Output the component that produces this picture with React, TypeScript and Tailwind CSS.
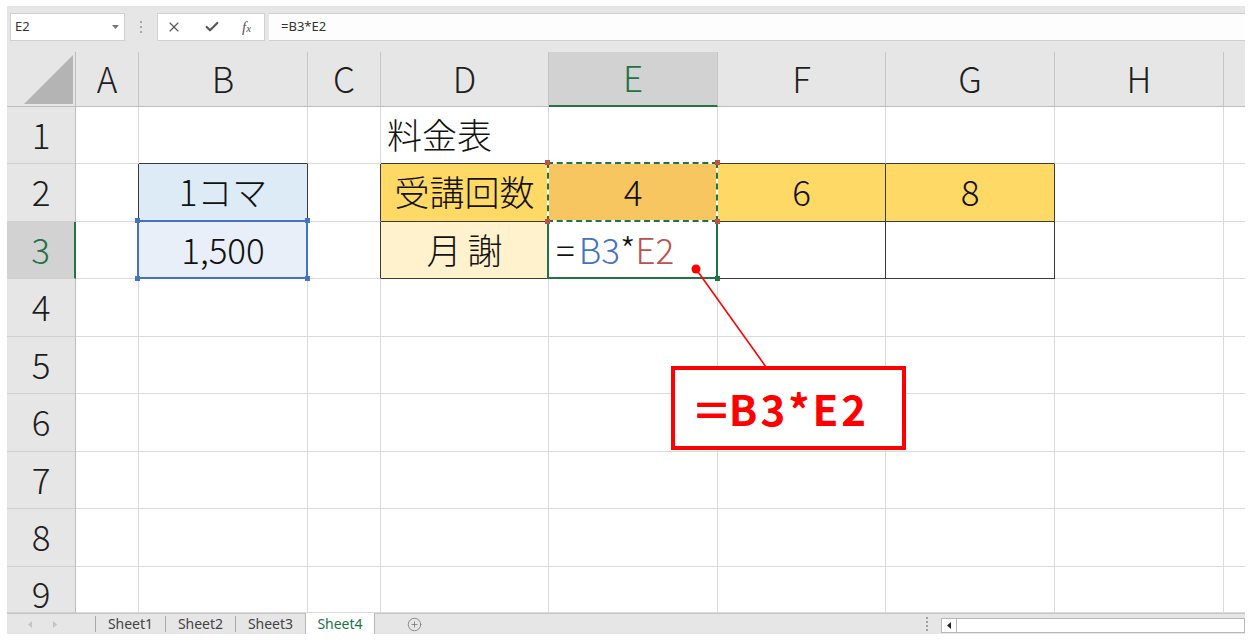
import React from 'react';
import { X, Check, CirclePlus } from 'lucide-react';

const COLS = ['', 'A', 'B', 'C', 'D', 'E', 'F', 'G', 'H', 'I'];
const ROWS = [0, 1, 2, 3, 4, 5, 6, 7, 8, 9];

// cells that carry the thin black table border
const FRAMED = new Set(['B2', 'B3', 'D2', 'E2', 'F2', 'G2', 'D3', 'E3', 'F3', 'G3']);
const framed = (c: number, r: number) => r > 0 && c > 0 && FRAMED.has(COLS[c] + r);

const FILL: Record<string, string> = {
  B2: 'bg-[#ddebf7]',
  B3: 'bg-[#e9eff8]',
  D2: 'bg-[#ffd966]',
  E2: 'bg-[#f8c660]',
  F2: 'bg-[#ffd966]',
  G2: 'bg-[#ffd966]',
  D3: 'bg-[#fff2cc]',
};

// last row is cut by the sheet tab bar, keep its text where a full row would put it
const pad = (r: number) => (r === 9 ? 'pt-[6px]' : 'pb-[4px]');

function Handle({ pos, color }: { pos: string; color: string }) {
  return <span className={`absolute w-[5px] h-[5px] ${pos} ${color}`} />;
}

function CellContent({ id }: { id: string }) {
  switch (id) {
    case 'D1':
      return <span className="pl-[6px]">料金表</span>;
    case 'B2':
      return <span>1コマ</span>;
    case 'B3':
      return (
        <>
          <span>1,500</span>
          <div className="absolute left-[-2px] top-[-2px] right-[-1px] bottom-[-1px] border-2 border-[#4472c4] z-10">
            <Handle pos="-left-[4px] -top-[4px]" color="bg-[#4472c4]" />
            <Handle pos="-right-[4px] -top-[4px]" color="bg-[#4472c4]" />
            <Handle pos="-left-[4px] -bottom-[4px]" color="bg-[#4472c4]" />
            <Handle pos="-right-[4px] -bottom-[4px]" color="bg-[#4472c4]" />
          </div>
        </>
      );
    case 'D2':
      return <span>受講回数</span>;
    case 'E2':
      return (
        <>
          <span>4</span>
          <div className="absolute left-[-2px] top-[-2px] right-[-1px] bottom-[-1px] border-2 border-white z-10">
            <div className="absolute -inset-[2px] border-2 border-dashed border-[#217346]" />
            <Handle pos="-left-[4px] -top-[4px]" color="bg-[#c0504d]" />
            <Handle pos="-right-[4px] -top-[4px]" color="bg-[#c0504d]" />
            <Handle pos="-left-[4px] -bottom-[4px]" color="bg-[#c0504d]" />
            <Handle pos="-right-[4px] -bottom-[4px]" color="bg-[#c0504d]" />
          </div>
        </>
      );
    case 'F2':
      return <span>6</span>;
    case 'G2':
      return <span>8</span>;
    case 'D3':
      return <span className="tracking-[6px] pl-[6px]">月謝</span>;
    case 'E3':
      return (
        <>
          <span className="pl-[7px]">
            <span className="mr-[4px]">=</span>
            <span className="text-[#4472c4]">B3</span>*<span className="text-[#c0504d]">E2</span>
          </span>
          <div className="absolute left-[-2px] top-[0px] right-[-1px] bottom-[-1px] border-2 border-t-0 border-[#217346] z-[5]">
            <Handle pos="-right-[4px] -bottom-[4px]" color="bg-[#217346]" />
          </div>
        </>
      );
    default:
      return null;
  }
}

function GridCell({ c, r }: { c: number; r: number }) {
  const id = COLS[c] + r;

  if (r === 0 && c === 0) {
    return (
      <div className="relative bg-[#e6e6e6] border-r border-b border-r-[#bdbdbd] border-b-[#bdbdbd] flex items-end justify-end pr-[2px] pb-[2px]">
        <svg width="49" height="49" viewBox="0 0 49 49">
          <polygon points="49,0 49,49 0,49" fill="#b4b4b4" />
        </svg>
      </div>
    );
  }

  if (r === 0) {
    const on = c === 5;
    return (
      <div
        className={`flex items-center justify-center pb-[4px] border-r border-r-[#c6c6c6] ${
          on ? 'bg-[#d2d2d2] text-[#217346] border-b-2 border-b-[#217346]' : 'bg-[#e6e6e6] text-[#1e1e1e] border-b border-b-[#bdbdbd]'
        }`}
      >
        {c < 9 ? COLS[c] : ''}
      </div>
    );
  }

  if (c === 0) {
    const on = r === 3;
    return (
      <div
        className={`flex items-center justify-center ${pad(r)} border-b border-b-[#d0d0d0] ${
          on ? 'bg-[#d2d2d2] text-[#217346] border-r-2 border-r-[#217346]' : 'bg-[#e6e6e6] text-[#1e1e1e] border-r border-r-[#bdbdbd]'
        }`}
      >
        {r}
      </div>
    );
  }

  const right = framed(c, r) || framed(c + 1, r) ? 'border-r-[#3a3a3a]' : 'border-r-[#dadada]';
  const bottom = framed(c, r) || framed(c, r + 1) ? 'border-b-[#3a3a3a]' : 'border-b-[#dadada]';
  const left = id === 'D1' || id === 'E3';

  return (
    <div
      className={`relative flex items-center ${pad(r)} border-r border-b text-[#111] ${right} ${bottom} ${FILL[id] ?? 'bg-white'} ${
        left ? 'justify-start' : 'justify-center'
      }`}
    >
      <CellContent id={id} />
    </div>
  );
}

export default function App() {
  return (
    <div className="relative w-[1251px] h-[643px] bg-white overflow-hidden pt-[6px] pl-[7px]">
      <div className="w-[1238px] h-[628px] bg-[#e6e6e6] flex flex-col">
        {/* formula bar */}
        <div className="h-[46px] pt-[7px] font-['Noto_Sans','Liberation_Sans',sans-serif] text-[13px] text-[#333]">
          <div className="h-[28px] flex">
            <div className="ml-[3px] w-[115px] h-[28px] bg-white border border-[#d0d0d0] flex items-center justify-between pl-[4px] pr-[5px]">
              <span>E2</span>
              <svg width="7" height="4" viewBox="0 0 7 4">
                <polygon points="0,0 7,0 3.5,4" fill="#777" />
              </svg>
            </div>
            <div className="w-[32px] flex flex-col items-center justify-center gap-[3px]">
              <span className="w-[2px] h-[2px] bg-[#a8a8a8]" />
              <span className="w-[2px] h-[2px] bg-[#a8a8a8]" />
              <span className="w-[2px] h-[2px] bg-[#a8a8a8]" />
            </div>
            <div className="w-[108px] bg-white border border-[#d0d0d0] flex items-center pl-[8px] gap-[22px] text-[#555]">
              <X size={16} strokeWidth={1.7} />
              <Check size={16} strokeWidth={3.2} />
              <span className="font-['Liberation_Serif',serif] italic text-[15px] leading-none">
                f<span className="text-[11px]">x</span>
              </span>
            </div>
            <div className="ml-[4px] flex-1 bg-[#fdfdfd] border-y border-[#cfcfcf] flex items-center pl-[12px]">=B3*E2</div>
          </div>
        </div>

        {/* grid */}
        <div className="h-[561px] overflow-hidden bg-white">
          <div className="grid grid-cols-[69px_63px_169px_73px_168px_169px_168px_169px_169px_60px] grid-rows-[55px_57px_58px_57px_58px_57px_58px_57px_58px_46px] text-[35px] leading-none font-light font-['Noto_Sans_CJK_JP','Noto_Sans',sans-serif]">
            {ROWS.map((r) => COLS.map((_, c) => <GridCell key={`${r}-${c}`} c={c} r={r} />))}
          </div>
        </div>

        {/* sheet tabs */}
        <div className="h-[21px] flex items-stretch border-t border-[#c6c6c6] bg-[#e6e6e6] text-[14px] text-[#444] font-['Noto_Sans','Liberation_Sans',sans-serif]">
          <div className="w-[88px] flex items-center pl-[21px] gap-[21px]">
            <svg width="4" height="7" viewBox="0 0 4 7">
              <polygon points="4,0 4,7 0,3.5" fill="#c4c4c4" />
            </svg>
            <svg width="4" height="7" viewBox="0 0 4 7">
              <polygon points="0,0 0,7 4,3.5" fill="#c4c4c4" />
            </svg>
          </div>
          {['Sheet1', 'Sheet2', 'Sheet3'].map((s) => (
            <div key={s} className="w-[70px] flex items-center justify-center border-l border-[#a8a8a8] my-[2px] leading-none">
              {s}
            </div>
          ))}
          <div className="w-[70px] -mt-px flex items-center justify-center bg-white text-[#217346] border-x border-[#b8b8b8] leading-none">
            Sheet4
          </div>
          <div className="w-[78px] flex items-center justify-center text-[#777]">
            <CirclePlus size={15} strokeWidth={1.3} />
          </div>
          <div className="flex-1" />
          <div className="w-[15px] flex flex-col items-center justify-center gap-[2px]">
            <span className="w-[2px] h-[2px] bg-[#a0a0a0]" />
            <span className="w-[2px] h-[2px] bg-[#a0a0a0]" />
            <span className="w-[2px] h-[2px] bg-[#a0a0a0]" />
            <span className="w-[2px] h-[2px] bg-[#a0a0a0]" />
          </div>
          <div className="ml-[7px] w-[304px] self-end mb-[1px] h-[15px] flex bg-white border border-[#b8b8b8]">
            <div className="w-[15px] border-r border-[#b8b8b8] flex items-center justify-center">
              <svg width="4" height="7" viewBox="0 0 4 7">
                <polygon points="4,0 4,7 0,3.5" fill="#222" />
              </svg>
            </div>
          </div>
        </div>
      </div>

      {/* callout */}
      <svg className="absolute left-0 top-0 pointer-events-none z-20" width="1251" height="643">
        <line x1="696" y1="269" x2="766" y2="367" stroke="#ff0000" strokeWidth="1.6" />
        <circle cx="696" cy="269" r="4.5" fill="#ff0000" />
      </svg>
      <div className="absolute left-[671px] top-[366px] w-[235px] h-[84px] z-20 bg-white border-[4px] border-[#ff0000] flex items-center pl-[20px] text-[#ff0000] text-[42px] font-bold leading-none tracking-[3px] font-['Noto_Sans_CJK_JP','Liberation_Sans',sans-serif]">
        <span className="inline-block scale-x-[1.33] origin-left mr-[6px]">=</span>
        B3*E2
      </div>
    </div>
  );
}
